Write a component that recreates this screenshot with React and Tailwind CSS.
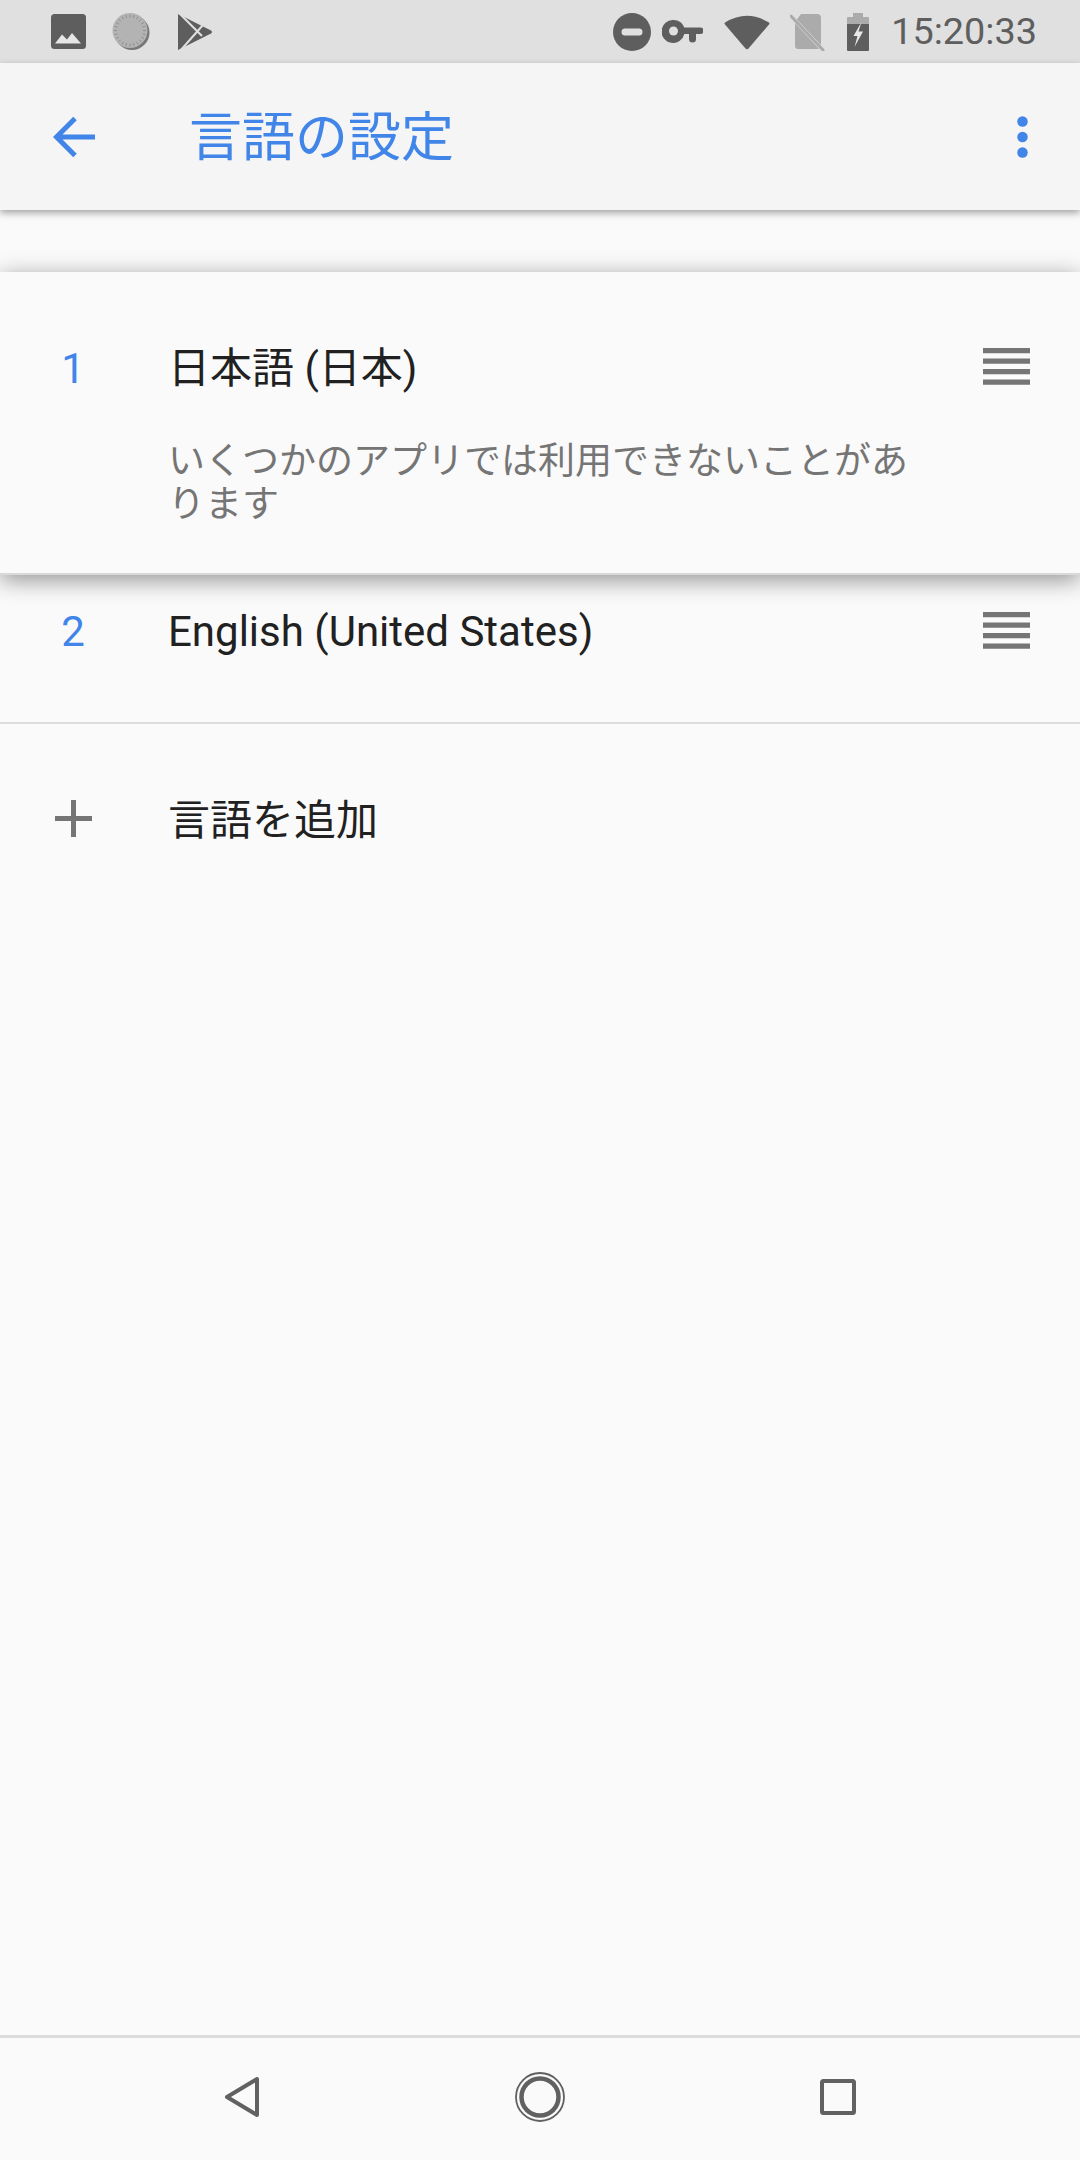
import React from "react";

const ticks = Array.from({ length: 24 }, (_, i) => (i * Math.PI) / 12);

const ImageIcon = () => (
  <svg width="35" height="35" viewBox="0 0 35 35">
    <rect width="35" height="35" rx="3.5" fill="#5e5e5e" />
    <path d="M4 29.5 L11 20.5 L16 25.5 L21 19 L30 29.5 Z" fill="#e6e6e6" />
  </svg>
);

const LoadingIcon = () => (
  <svg width="38" height="39" viewBox="0 0 38 39">
    <circle cx="20" cy="20.5" r="17.5" fill="#777777" />
    <circle cx="18" cy="18.5" r="17.5" fill="#b3b3b3" />
    {ticks.map((a, i) => (
      <line
        key={i}
        x1={18 + Math.cos(a) * 13}
        y1={18.5 + Math.sin(a) * 13}
        x2={18 + Math.cos(a) * 16}
        y2={18.5 + Math.sin(a) * 16}
        stroke="#8e8e8e"
        strokeWidth="1"
      />
    ))}
  </svg>
);

const PlayIcon = () => (
  <svg width="35" height="38" viewBox="0 0 35 38">
    <path d="M0 1 L33 17.5 Q35 19 33 20.5 L0 37 Z" fill="#5e5e5e" />
    <path d="M1 0 L24 23 M2 38 L25 12" stroke="#e0e0e0" strokeWidth="2" fill="none" />
  </svg>
);

const MinusIcon = () => (
  <svg width="38" height="38" viewBox="0 0 38 38">
    <circle cx="19" cy="19" r="19" fill="#5e5e5e" />
    <rect x="8.5" y="15.5" width="21" height="7" rx="3.5" fill="#e0e0e0" />
  </svg>
);

const KeyIcon = () => (
  <svg width="41" height="23" viewBox="0 0 41 23">
    <path
      d="M11.5 0 a11.5 11.5 0 0 1 10.8 7.5 H38.5 a2.5 2.5 0 0 1 0 6.5 H34 V19 a3.5 3.5 0 0 1 -7 0 V14 H22.3 A11.5 11.5 0 1 1 11.5 0 Z"
      fill="#5e5e5e"
    />
    <circle cx="11.5" cy="11" r="4.5" fill="#e0e0e0" />
  </svg>
);

const WifiIcon = () => (
  <svg width="46" height="37" viewBox="0 0 46 37">
    <path
      d="M1 9.5 Q23 -4 45 9.5 Q46 10.5 45 11.5 L24.5 35.5 Q23 37 21.5 35.5 L1 11.5 Q0 10.5 1 9.5 Z"
      fill="#5e5e5e"
    />
  </svg>
);

const NoSimIcon = () => (
  <svg width="36" height="38" viewBox="0 0 36 38">
    <path d="M11 1 H27 Q31 1 31 5 V33 Q31 36 27 36 H8 Q5 36 5 33 V9 Z" fill="#ababab" />
    <path d="M1 3 L33 37" stroke="#e0e0e0" strokeWidth="4" />
    <path d="M1 3 L33 37" stroke="#ababab" strokeWidth="3" strokeLinecap="round" />
  </svg>
);

const BatteryIcon = () => (
  <svg width="22" height="38" viewBox="0 0 22 38">
    <path d="M6 0 H16 V4 H21 Q22 4 22 5 V11 H0 V5 Q0 4 1 4 H6 Z" fill="#ababab" />
    <path d="M0 11 H22 V37 Q22 38 21 38 H1 Q0 38 0 37 Z" fill="#5e5e5e" />
    <path d="M14.5 9 L6.5 23 H10.5 L7.5 34 L16 18.5 H11.5 Z" fill="#e8e8e8" />
  </svg>
);

const ArrowBack = () => (
  <svg width="42" height="42" viewBox="0 0 42 42">
    <path d="M42 21 H4 M22 2.5 L3.5 21 L22 39.5" stroke="#4285e8" strokeWidth="5" fill="none" />
  </svg>
);

const Kebab = () => (
  <svg width="11" height="42" viewBox="0 0 11 42">
    <circle cx="5.5" cy="5.5" r="5.25" fill="#4285e8" />
    <circle cx="5.5" cy="21" r="5.25" fill="#4285e8" />
    <circle cx="5.5" cy="36.5" r="5.25" fill="#4285e8" />
  </svg>
);

const DragHandle = () => (
  <svg width="48" height="37" viewBox="0 0 48 37" className="shrink-0">
    <path d="M0 0 H47 V5.3 H0 Z M0 10.5 H47 V15.8 H0 Z M0 21 H47 V26.3 H0 Z M0 31.5 H47 V36.8 H0 Z" fill="#757575" />
  </svg>
);

const PlusIcon = () => (
  <svg width="37" height="37" viewBox="0 0 37 37">
    <path d="M18.5 0 V37 M0 18.5 H37" stroke="#757575" strokeWidth="5" fill="none" />
  </svg>
);

const NavBack = () => (
  <svg width="36" height="42" viewBox="0 0 36 42">
    <path d="M33 3 V39 L3 21 Z" stroke="#616161" strokeWidth="4" strokeLinejoin="round" fill="none" />
  </svg>
);

const NavHome = () => (
  <svg width="50" height="50" viewBox="0 0 50 50">
    <circle cx="25" cy="25" r="24" stroke="#616161" strokeWidth="1.8" fill="none" />
    <circle cx="25" cy="25" r="18.5" stroke="#616161" strokeWidth="4.5" fill="none" />
  </svg>
);

const NavRecent = () => (
  <svg width="36" height="36" viewBox="0 0 36 36">
    <rect x="2" y="2" width="32" height="32" rx="1.5" stroke="#616161" strokeWidth="4" fill="none" />
  </svg>
);

const App = () => {
  return (
    <div className="flex flex-col w-[1080px] h-[2160px] bg-[#fafafa] font-['Roboto','Noto_Sans_CJK_JP',sans-serif] overflow-hidden">

      {/* STATUS BAR */}
      <div className="flex items-center justify-between h-[63px] shrink-0 bg-[#e0e0e0] pl-[51px] pr-[43px]">
        <div className="flex items-center">
          <ImageIcon />
          <div className="ml-[26px]"><LoadingIcon /></div>
          <div className="ml-[28px]"><PlayIcon /></div>
        </div>
        <div className="flex items-center">
          <MinusIcon />
          <div className="ml-[11px]"><KeyIcon /></div>
          <div className="ml-[21px]"><WifiIcon /></div>
          <div className="ml-[20px]"><NoSimIcon /></div>
          <div className="ml-[21px]"><BatteryIcon /></div>
          <span className="ml-[22px] text-[37.8px] leading-[63px] text-[#5e5e5e]">15:20:33</span>
        </div>
      </div>

      {/* APP BAR */}
      <div className="relative z-10 flex items-center h-[147px] shrink-0 bg-[#f5f5f5] pl-[53px] pr-[52px] shadow-[0_3px_7px_rgba(0,0,0,0.35)]">
        <ArrowBack />
        <h1 className="ml-[94px] flex-1 pt-[2px] text-[53px] font-normal leading-[72px] text-[#4285e8]">言語の設定</h1>
        <Kebab />
      </div>

      {/* DRAGGED ITEM */}
      <div className="relative z-10 mt-[62px] h-[303px] shrink-0 flex bg-[#fafafa] border-b-2 border-[#d9d9d9] pr-[49px] shadow-[0_5px_22px_rgba(0,0,0,0.42)]">
        <div className="w-[168px] shrink-0 pt-[69px] pl-[43px]">
          <div className="w-[60px] text-center text-[42px] leading-[56px] text-[#4285e8]">1</div>
        </div>
        <div className="w-[750px]">
          <div className="pt-[69px] text-[42px] leading-[56px] text-[#212121]">日本語 (日本)</div>
          <div className="mt-[43px] text-[37px] leading-[43px] text-[#757575]">いくつかのアプリでは利用できないことがあります</div>
        </div>
        <div className="flex-1 flex justify-end pt-[76px]">
          <DragHandle />
        </div>
      </div>

      {/* SECOND ITEM */}
      <div className="flex items-center h-[111px] shrink-0 pr-[49px]">
        <div className="w-[168px] shrink-0 pl-[43px] pt-[2px]">
          <div className="w-[60px] text-center text-[42px] leading-[56px] text-[#4285e8]">2</div>
        </div>
        <div className="flex-1 pt-[2px] text-[42px] leading-[56px] text-[#212121]">English (United States)</div>
        <DragHandle />
      </div>

      <div className="mt-[36px] h-[2px] shrink-0 bg-[#dcdcdc]" />

      {/* ADD LANGUAGE */}
      <div className="flex items-center h-[194px] shrink-0">
        <div className="w-[168px] shrink-0 pl-[55px] pb-[6px]">
          <PlusIcon />
        </div>
        <div className="text-[42px] leading-[56px] text-[#212121]">言語を追加</div>
      </div>

      <div className="flex-1" />

      {/* NAV BAR */}
      <div className="flex items-center justify-center h-[125px] shrink-0 border-t-[3px] border-[#dcdcdc] bg-[#fafafa] pb-[4px]">
        <div className="flex justify-center w-[298px]"><NavBack /></div>
        <div className="flex justify-center w-[298px]"><NavHome /></div>
        <div className="flex justify-center w-[298px]"><NavRecent /></div>
      </div>

    </div>
  );
};

export default App;
